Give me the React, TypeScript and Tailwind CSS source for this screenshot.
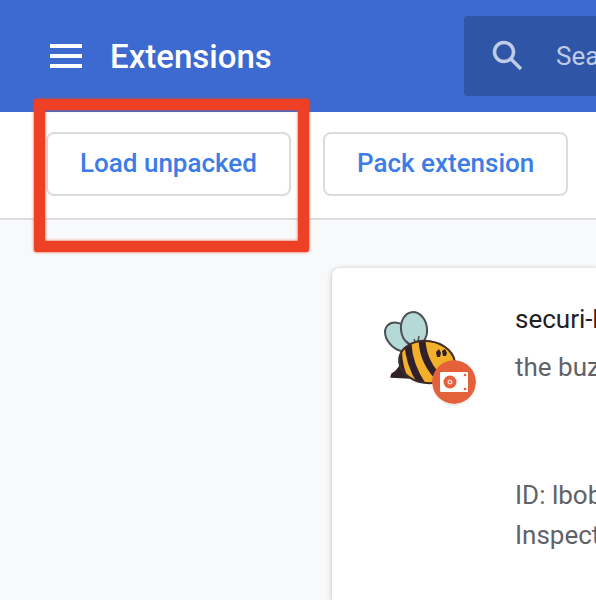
function BeeIcon() {
  return (
    <svg viewBox="0 0 96 96" className="h-24 w-24" aria-hidden="true">
      <defs>
        <clipPath id="bee-body">
          <ellipse cx="47" cy="53" rx="28" ry="21" transform="rotate(8 47 53)" />
        </clipPath>
      </defs>
      <path d="M22 49q-1 11-10 16l-1 3 20 1z" fill="#30202a" stroke="#30202a" strokeWidth="1.5" strokeLinejoin="round" />
      <g fill="#b5d9d7" stroke="#4a4f52" strokeWidth="2">
        <ellipse cx="20" cy="28" rx="12" ry="17" transform="rotate(-48 20 28)" />
        <ellipse cx="34" cy="20" rx="13" ry="17" transform="rotate(-8 34 20)" />
      </g>
      <path d="M26 32l8 6M39 27l-2 10M43 31l-5 6M34 30l3 7" stroke="#4a4f52" strokeWidth="1.5" fill="none" />
      <g clipPath="url(#bee-body)">
        <rect width="96" height="96" fill="#f2b02b" />
        <path d="M28 35q1 21 15 42M42 29q0 25 21 44" stroke="#30202a" strokeWidth="7" fill="none" />
        <path d="M20 42q0 17 9 34" stroke="#30202a" strokeWidth="4" fill="none" />
      </g>
      <ellipse cx="47" cy="53" rx="28" ry="21" transform="rotate(8 47 53)" fill="none" stroke="#3d2c2a" strokeWidth="2" />
      <path d="M56 43l3-3 2 4-1 4h-3zM62 42l3-2 2 4-1 3h-3z" fill="#30202a" />
    </svg>
  );
}

function UnpackedBadge() {
  return (
    <svg viewBox="0 0 44 44" className="h-11 w-11 rounded-full shadow-sm" aria-hidden="true">
      <circle cx="22" cy="22" r="22" fill="#e4613b" />
      <rect x="8" y="12" width="28" height="20" rx="1" fill="#fff" />
      <circle cx="18" cy="22" r="6.5" fill="#e4613b" />
      <circle cx="18" cy="22" r="2.5" fill="#f6cfc2" />
      <circle cx="18" cy="22" r="1" fill="#e4613b" />
      <circle cx="33" cy="15" r="1.3" fill="#e4613b" />
      <circle cx="33" cy="29" r="1.3" fill="#e4613b" />
    </svg>
  );
}

function ToolbarButton({ label }: { label: string }) {
  return (
    <button
      type="button"
      className="h-16 shrink-0 rounded-lg border-2 border-[#dadce0] bg-white px-8 pb-[2px] text-[26px] leading-8 font-medium text-[#3b7ce8]"
    >
      {label}
    </button>
  );
}

function Header() {
  return (
    <header className="flex h-28 items-center bg-[#3c6ad0] text-white">
      <div className="flex w-[464px] shrink-0 items-center gap-7 pl-[50px]">
        <button type="button" aria-label="Main menu" className="flex h-8 w-8 items-center">
          <svg viewBox="0 0 32 24" className="h-6 w-8" fill="currentColor">
            <path d="M0 0h32v4H0zM0 10h32v4H0zM0 20h32v4H0z" />
          </svg>
        </button>
        <h1 className="pt-[2px] text-[33px] leading-10 font-medium">Extensions</h1>
      </div>
      <label className="flex h-20 min-w-0 flex-1 items-center gap-8 rounded-l bg-[#2e55a6] pl-7 text-[#c0cce4]">
        <svg viewBox="0 0 32 32" className="h-8 w-8 shrink-0" fill="none" stroke="currentColor" strokeWidth="3.5" aria-hidden="true">
          <circle cx="12" cy="12" r="9.5" />
          <path d="M19 19l10 10" />
        </svg>
        <input
          type="text"
          aria-label="Search extensions"
          placeholder="Search"
          className="min-w-0 flex-1 bg-transparent text-[26px] leading-8 outline-none placeholder:text-[#c0cce4]"
        />
      </label>
    </header>
  );
}

export default function App() {
  return (
    <div className="relative flex min-h-screen flex-col overflow-hidden bg-[#f8f9fa] font-['Roboto',sans-serif]">
      <Header />
      <div className="flex h-[108px] gap-8 border-b-2 border-[#dadce0] bg-white pt-5 pl-[46px]">
        <ToolbarButton label="Load unpacked" />
        <ToolbarButton label="Pack extension" />
      </div>
      <main className="flex flex-1 pt-12 pl-[332px]">
        <article className="flex min-w-0 flex-1 gap-[39px] overflow-hidden rounded-tl-lg bg-white pt-[35px] pl-12 shadow-[0_1px_5px_rgba(60,64,67,0.35)]">
          <div className="relative h-24 w-24 shrink-0 pt-1.5">
            <BeeIcon />
            <div className="absolute top-[57px] left-[52px]">
              <UnpackedBadge />
            </div>
          </div>
          <div className="min-w-0 flex-1 text-[26px] leading-8 whitespace-nowrap text-[#5f6368]">
            <h2 className="text-[#202124]">securi-b</h2>
            <p className="mt-4">the buz</p>
            <p className="mt-24">ID: lbob</p>
            <p className="mt-2">Inspect</p>
          </div>
        </article>
      </main>
      <div className="pointer-events-none absolute top-[99px] left-[34px] h-[153px] w-[275px] rounded-xs border-[11px] border-[#ee4025] shadow-[0_0_3px_#ee4025,inset_0_0_3px_#ee4025]" />
    </div>
  );
}
